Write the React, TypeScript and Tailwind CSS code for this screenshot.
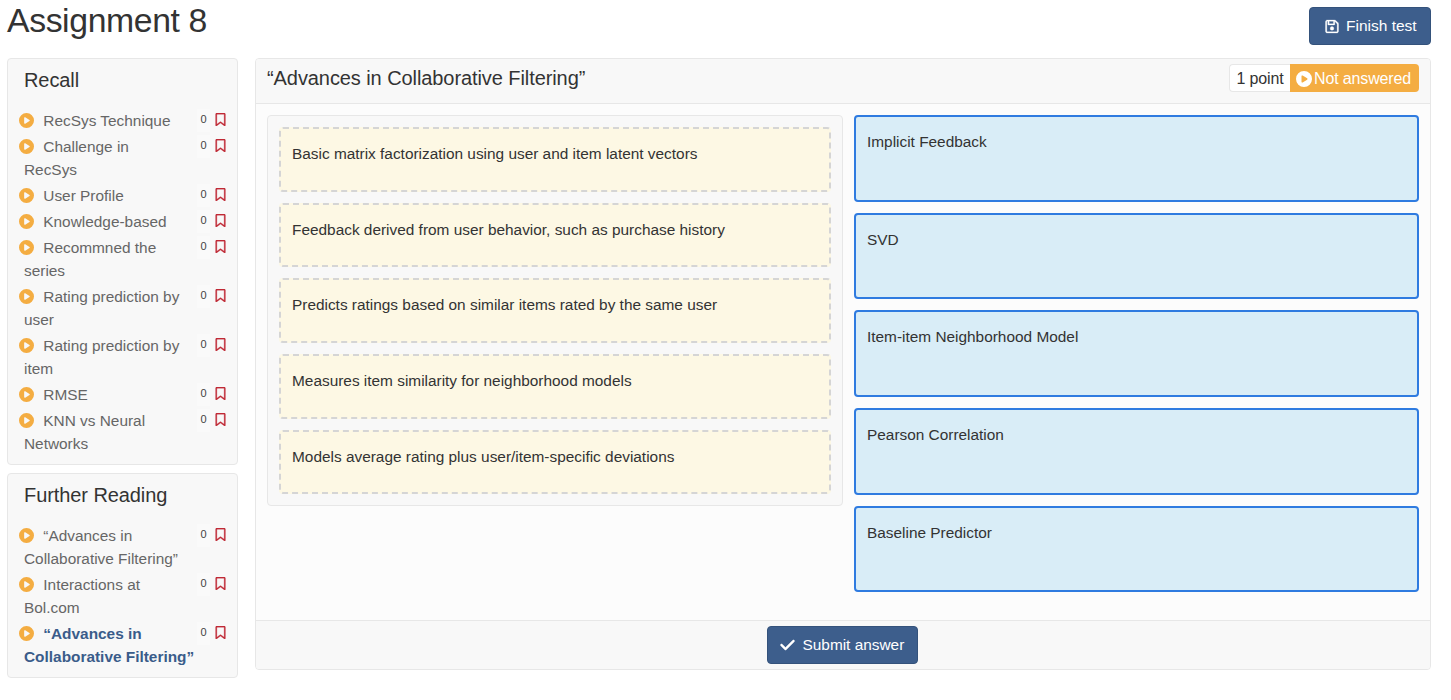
import { FaCheck, FaCirclePlay, FaRegBookmark, FaRegFloppyDisk } from 'react-icons/fa6';

type Item = { label: string; active?: boolean };

const recall: Item[] = [
  { label: 'RecSys Technique' },
  { label: 'Challenge in RecSys' },
  { label: 'User Profile' },
  { label: 'Knowledge-based' },
  { label: 'Recommned the series' },
  { label: 'Rating prediction by user' },
  { label: 'Rating prediction by item' },
  { label: 'RMSE' },
  { label: 'KNN vs Neural Networks' },
];

const reading: Item[] = [
  { label: '“Advances in Collaborative Filtering”' },
  { label: 'Interactions at Bol.com' },
  { label: '“Advances in Collaborative Filtering”', active: true },
];

const definitions = [
  'Basic matrix factorization using user and item latent vectors',
  'Feedback derived from user behavior, such as purchase history',
  'Predicts ratings based on similar items rated by the same user',
  'Measures item similarity for neighborhood models',
  'Models average rating plus user/item-specific deviations',
];

const terms = [
  'Implicit Feedback',
  'SVD',
  'Item-item Neighborhood Model',
  'Pearson Correlation',
  'Baseline Predictor',
];

function Section({ title, items }: { title: string; items: Item[] }) {
  return (
    <section className="rounded border border-[#e7e7e7] bg-[#f8f8f8] pb-[6px]">
      <h2 className="h-[50px] pt-[9px] pl-4 text-[20px] leading-6 tracking-[-0.08px]">{title}</h2>
      <ul>
        {items.map((item, i) => (
          <li key={i} className="pr-[11px] pb-[3px] pl-4 leading-[23px]">
            <div className="float-right flex h-[23px] w-[43px] items-start justify-end">
              <span className="flex h-[23px] w-[13px] items-center justify-center bg-[#fafafa] pb-[2px] text-[11px] text-[#444444]">
                0
              </span>
              <FaRegBookmark className="mt-[4px] ml-[5px] h-[13px] w-[11px] stroke-[12] text-[#c02b37]" />
            </div>
            <a className={item.active ? 'font-bold text-[#3a5c8a]' : 'text-[#666666]'}>
              <FaCirclePlay className="-mt-[3px] mr-[9.3px] -ml-[5px] inline size-[15px] align-middle text-[#f4ad42]" />
              {item.label}
            </a>
          </li>
        ))}
      </ul>
    </section>
  );
}

export default function App() {
  return (
    <div className="h-[700px] overflow-hidden bg-white pr-5 pl-[7px] font-['Liberation_Sans',Arial,sans-serif] text-[15.4px] text-[#333333]">
      <header className="flex h-[58px] items-start justify-between">
        <h1 className="text-[33.75px] leading-[40px] tracking-[-0.38px]">Assignment 8</h1>
        <button className="mt-[7px] flex h-[38px] w-[122px] items-center rounded border border-[#34527b] bg-[#3d5e8c] pl-[15px] text-[15.5px] text-white">
          <FaRegFloppyDisk className="mr-[7px] h-[15px] w-[14px] stroke-[8]" />
          Finish test
        </button>
      </header>
      <div className="flex items-start gap-[17px]">
        <aside className="flex w-[231px] flex-col gap-2">
          <Section title="Recall" items={recall} />
          <Section title="Further Reading" items={reading} />
        </aside>
        <main className="flex h-[612px] flex-1 flex-col overflow-hidden rounded border border-[#e7e7e7] bg-[#fcfcfc]">
          <div className="flex h-[45px] items-start justify-between border-b border-[#e7e7e7] bg-[#f8f8f8] px-[11px]">
            <h2 className="pt-[7px] text-[20px] leading-6 tracking-[-0.08px]">“Advances in Collaborative Filtering”</h2>
            <div className="mt-[5px] flex h-7 text-[16px] tracking-[-0.14px]">
              <span className="flex w-[61px] items-center justify-center rounded-l border border-r-0 border-[#e7e7e7] bg-white pt-px">
                1 point
              </span>
              <span className="flex w-[129px] items-center gap-[2px] rounded-r bg-[#f4ad42] pt-px pl-[6px] text-white">
                <FaCirclePlay className="size-4" />
                Not answered
              </span>
            </div>
          </div>
          <div className="flex flex-1 items-start gap-[11px] px-[11px] pt-[11px]">
            <div className="flex h-[391px] w-[576px] flex-col gap-[11px] rounded border border-[#e7e7e7] bg-[#f8f8f8] px-[11px] pt-[11.2px]">
              {definitions.map((text) => (
                <div
                  key={text}
                  className="h-[64.6px] rounded border-2 border-dashed border-[#d5d5d5] bg-[#fdf8e4] px-[11px] pt-[13px] leading-[23px]"
                >
                  {text}
                </div>
              ))}
            </div>
            <div className="flex flex-1 flex-col gap-[11.2px]">
              {terms.map((text) => (
                <div
                  key={text}
                  className="h-[86.5px] rounded border-2 border-[#2f7be0] bg-[#d9edf7] px-[11px] pt-[13px] leading-[23px]"
                >
                  {text}
                </div>
              ))}
            </div>
          </div>
          <footer className="flex h-[49px] items-start justify-center border-t border-[#e7e7e7] bg-[#f8f8f8] pt-[5px] pr-[2px]">
            <button className="flex h-[38px] w-[151px] items-center rounded border border-[#34527b] bg-[#3d5e8c] pl-[12px] text-white">
              <FaCheck className="mr-[8px] h-4 w-[15px] stroke-[16]" />
              Submit answer
            </button>
          </footer>
        </main>
      </div>
    </div>
  );
}
